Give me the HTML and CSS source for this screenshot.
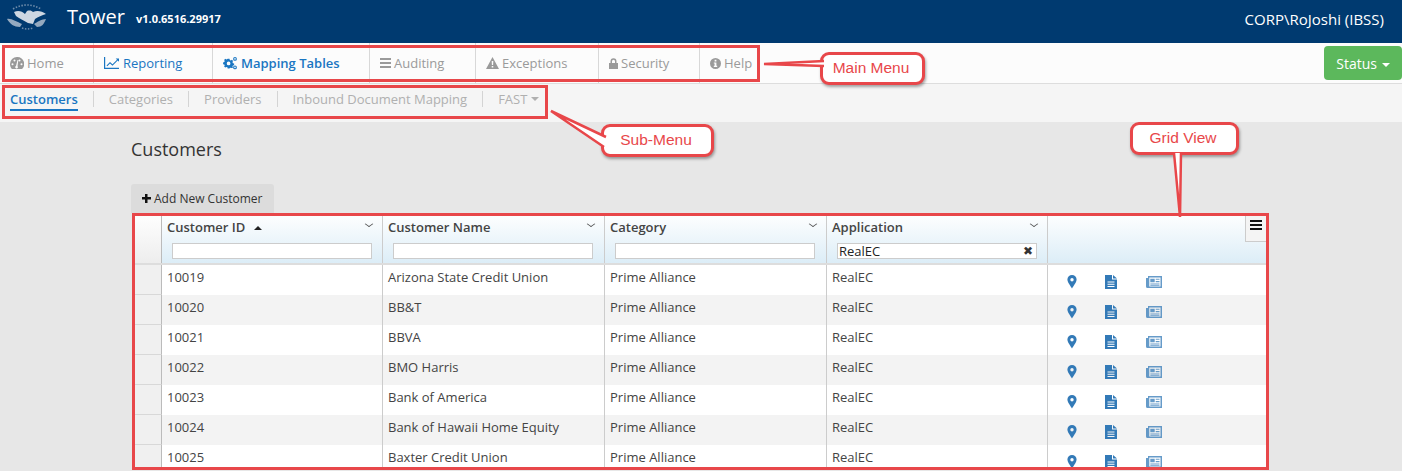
FILE: index.html
```html
<!DOCTYPE html>
<html lang="en">
  <head>
    <meta charset="UTF-8" />
    <title>Tower</title>
    <link rel="stylesheet" href="styles.css">
  </head>
  <body>
    <svg class="defs" width="0" height="0">
      <symbol id="i-pin" viewBox="0 0 10 14"><path fill-rule="evenodd" d="M5 0a4.6 4.6 0 0 0-4.6 4.6C.4 7.4 3.6 11 5 13.6 6.400 11 9.600 7.400 9.600 4.600A4.600 4.600 0 0 0 5 0zm0 3a1.700 1.700 0 1 1 0 3.400A1.700 1.700 0 0 1 5 3z"/></symbol>
      <symbol id="i-doc" viewBox="0 0 12 14"><path fill-rule="evenodd" d="M0 0h7v4.500h5V14H0zM8 0l4 3.500H8zM2.500 6.500v1h7v-1zm0 2.200v1h7v-1zm0 2.200v1h7v-1z"/></symbol>
      <symbol id="i-news" viewBox="0 0 16 12"><path fill-rule="evenodd" opacity=".75" d="M2 0h14v12H1.500A1.500 1.500 0 0 1 0 10.500V2h2zM3.300 1.500V10.500h11.200V1.500zM4.300 2.700h4.400v3.600H4.300zM9.700 2.700h3.800v1H9.700zm0 2.400h3.800v1.200H9.700zM4.300 7.400h9.200v1H4.300zm0 1.700h9.200v.7H4.300z"/></symbol>
    </svg>

    <header class="topbar">
      <div class="brand">
        <svg class="logo" width="42" height="30" viewBox="0 0 42 30">
          <path d="M6 7Q20-1 34 7" fill="none" stroke="#6f8dab" stroke-width="1.600" stroke-dasharray="1.500 1.500"/>
          <path d="M7 10C11 8 15 9 18 12L20 9C23 8 25 9 26 10C30 8 35 9 39 12C35 13 31 15 28 17L26 22 21 21C17 19 12 16 9 14Z" fill="#cdd7e2"/>
          <path d="M0 17C4 16 10 20 15 22L13 25C7 25 3 22 0 17ZM39 17C35 17 30 20 27 22L30 25C35 25 37 22 39 17Z" fill="#94a9bf"/>
          <path d="M15 26Q20 28 26 26" fill="none" stroke="#6f8dab" stroke-width="1.500" stroke-dasharray="1.500 1.500"/>
        </svg>
        <span class="brand-name">Tower</span>
        <span class="brand-version">v1.0.6516.29917</span>
      </div>
      <div class="user-name">CORP\RoJoshi (IBSS)</div>
    </header>

    <nav class="mainnav">
      <ul class="mainnav-list">
        <li class="mainnav-item item-home">
          <svg class="ico" width="14" height="12" viewBox="0 0 14 12"><path fill-rule="evenodd" d="M7 0a7 7 0 0 0-7 7c0 1.900.7 3.600 1.900 5h10.200A7 7 0 0 0 7 0zM2.500 6.200a1 1 0 1 1 0 2 1 1 0 0 1 0-2zM4.500 2.500a1 1 0 1 1 0 2 1 1 0 0 1 0-2zM9.500 2.500a1 1 0 1 1 0 2 1 1 0 0 1 0-2zM11.500 6.200a1 1 0 1 1 0 2 1 1 0 0 1 0-2zM6 9l1.500-6 .8.200L7.500 9.300A1.300 1.300 0 1 1 6 9z"/></svg>
          Home
        </li>
        <li class="mainnav-item item-reporting is-blue">
          <svg class="ico" width="15" height="12" viewBox="0 0 15 12"><path d="M0 0h1.200v10.800H15V12H0z"/><path d="M2.500 8.500 6 5l2.500 2.300L13 2.800l-1.300-1.300H15v3.300l-1.300-1.300-5.200 5.200L6 6.400 3.300 9.300z"/></svg>
          Reporting
        </li>
        <li class="mainnav-item item-mapping is-blue is-active">
          <svg class="ico" width="15" height="13" viewBox="0 0 15 13"><path fill-rule="evenodd" d="M4 2.500h2l.3 1.300 1.100.5 1.200-.7 1.300 1.400-.7 1.100.5 1.200 1.300.3v2l-1.300.3-.5 1.100.7 1.200L8 12.600l-.7-.5-1 .4-.3 .5H4l-.3-1.200-1.100-.5-1.200.7L.1 11l.7-1.200-.5-1.100L-1 8.400v-2l1.300-.3.500-1.200L.100 3.800 1.400 2.500l1.200.7 1.100-.5zM5 5.500a2 2 0 1 0 0 4 2 2 0 0 0 0-4z" transform="translate(1 -.5) scale(.92)"/><path fill-rule="evenodd" d="M12 0a1.900 1.900 0 1 1 0 3.800A1.900 1.900 0 0 1 12 0zm0 1.100a.8.800 0 1 0 0 1.600.8.800 0 0 0 0-1.600zM12 8.500a1.900 1.900 0 1 1 0 3.800 1.900 1.900 0 0 1 0-3.800zm0 1.100a.8.800 0 1 0 0 1.600.8.800 0 0 0 0-1.600z"/></svg>
          Mapping Tables
        </li>
        <li class="mainnav-item item-auditing">
          <svg class="ico" width="11" height="10" viewBox="0 0 11 10"><path d="M0 0h11v2H0zM0 4h11v2H0zM0 8h11v2H0z"/></svg>
          Auditing
        </li>
        <li class="mainnav-item item-exceptions">
          <svg class="ico" width="13" height="12" viewBox="0 0 13 12"><path fill-rule="evenodd" d="M6.500 0 13 12H0zM5.700 4l.2 4h1.200l.2-4zM5.700 9v1.500h1.600V9z"/></svg>
          Exceptions
        </li>
        <li class="mainnav-item item-security">
          <svg class="ico" width="9" height="11" viewBox="0 0 9 11"><path fill-rule="evenodd" d="M1.500 5V3.200a3 3 0 0 1 6 0V5H9v6H0V5zM3 5h3V3.200a1.500 1.500 0 0 0-3 0z"/></svg>
          Security
        </li>
        <li class="mainnav-item item-help">
          <svg class="ico" width="11" height="11" viewBox="0 0 11 11"><path fill-rule="evenodd" d="M5.500 0a5.500 5.500 0 1 1 0 11 5.500 5.500 0 0 1 0-11zM4.600 1.800v1.700h1.800V1.800zM3.800 4.500v1h.8v2.200h-.8v1.200h3.400V7.700h-.8V4.500z"/></svg>
          Help
        </li>
      </ul>
      <button class="status-btn">Status <span class="caret"></span></button>
    </nav>

    <nav class="subnav">
      <a class="subnav-item is-current item-customers">Customers</a>
      <a class="subnav-item item-categories">Categories</a>
      <a class="subnav-item item-providers">Providers</a>
      <a class="subnav-item item-inbound">Inbound Document Mapping</a>
      <a class="subnav-item item-fast">FAST <span class="caret"></span></a>
    </nav>

    <main class="content">
      <h1 class="page-title">Customers</h1>
      <button class="add-btn"><span class="plus"></span>Add New Customer</button>

      <div class="grid">
        <div class="grid-head">
          <div class="head-gutter"></div>
          <div class="head-cell">
            <div class="head-label">Customer ID <span class="sort-up"></span><span class="chev"></span></div>
            <div class="filter"></div>
          </div>
          <div class="head-cell">
            <div class="head-label">Customer Name<span class="chev"></span></div>
            <div class="filter"></div>
          </div>
          <div class="head-cell">
            <div class="head-label">Category<span class="chev"></span></div>
            <div class="filter"></div>
          </div>
          <div class="head-cell">
            <div class="head-label">Application<span class="chev"></span></div>
            <div class="filter">RealEC<span class="filter-clear">✖</span></div>
          </div>
          <div class="head-cell head-last">
            <div class="grid-menu"><span></span><span></span><span></span></div>
          </div>
        </div>

        <div class="grid-row">
          <div class="row-gutter"></div><div class="cell">10019</div><div class="cell">Arizona State Credit Union</div><div class="cell">Prime Alliance</div><div class="cell">RealEC</div>
          <div class="cell cell-actions"><svg class="act-pin"><use href="#i-pin"/></svg><svg class="act-doc"><use href="#i-doc"/></svg><svg class="act-news"><use href="#i-news"/></svg></div>
        </div>
        <div class="grid-row">
          <div class="row-gutter"></div><div class="cell">10020</div><div class="cell">BB&amp;T</div><div class="cell">Prime Alliance</div><div class="cell">RealEC</div>
          <div class="cell cell-actions"><svg class="act-pin"><use href="#i-pin"/></svg><svg class="act-doc"><use href="#i-doc"/></svg><svg class="act-news"><use href="#i-news"/></svg></div>
        </div>
        <div class="grid-row">
          <div class="row-gutter"></div><div class="cell">10021</div><div class="cell">BBVA</div><div class="cell">Prime Alliance</div><div class="cell">RealEC</div>
          <div class="cell cell-actions"><svg class="act-pin"><use href="#i-pin"/></svg><svg class="act-doc"><use href="#i-doc"/></svg><svg class="act-news"><use href="#i-news"/></svg></div>
        </div>
        <div class="grid-row">
          <div class="row-gutter"></div><div class="cell">10022</div><div class="cell">BMO Harris</div><div class="cell">Prime Alliance</div><div class="cell">RealEC</div>
          <div class="cell cell-actions"><svg class="act-pin"><use href="#i-pin"/></svg><svg class="act-doc"><use href="#i-doc"/></svg><svg class="act-news"><use href="#i-news"/></svg></div>
        </div>
        <div class="grid-row">
          <div class="row-gutter"></div><div class="cell">10023</div><div class="cell">Bank of America</div><div class="cell">Prime Alliance</div><div class="cell">RealEC</div>
          <div class="cell cell-actions"><svg class="act-pin"><use href="#i-pin"/></svg><svg class="act-doc"><use href="#i-doc"/></svg><svg class="act-news"><use href="#i-news"/></svg></div>
        </div>
        <div class="grid-row">
          <div class="row-gutter"></div><div class="cell">10024</div><div class="cell">Bank of Hawaii Home Equity</div><div class="cell">Prime Alliance</div><div class="cell">RealEC</div>
          <div class="cell cell-actions"><svg class="act-pin"><use href="#i-pin"/></svg><svg class="act-doc"><use href="#i-doc"/></svg><svg class="act-news"><use href="#i-news"/></svg></div>
        </div>
        <div class="grid-row">
          <div class="row-gutter"></div><div class="cell">10025</div><div class="cell">Baxter Credit Union</div><div class="cell">Prime Alliance</div><div class="cell">RealEC</div>
          <div class="cell cell-actions"><svg class="act-pin"><use href="#i-pin"/></svg><svg class="act-doc"><use href="#i-doc"/></svg><svg class="act-news"><use href="#i-news"/></svg></div>
        </div>
      </div>
    </main>

    <!-- red annotations drawn over the screenshot -->
    <div class="mark mark-main"></div>
    <div class="mark mark-sub"></div>
    <div class="mark mark-grid"></div>
    <div class="callout callout-main">Main Menu</div>
    <div class="callout callout-sub">Sub-Menu</div>
    <div class="callout callout-grid">Grid View</div>
    <svg class="pointers" width="1402" height="471">
      <polyline points="824,61 764,64 824,66"/>
      <polyline points="606,137 551,111 604,147"/>
      <polyline points="1174,153 1180,217 1181,153"/>
    </svg>
  </body>
</html>
```

FILE: styles.css
```css
* {
  box-sizing: border-box;
}

html,
body {
  height: 471px;
  overflow: hidden;
}

body {
  margin: 0;
  font-family: "Open Sans", sans-serif;
  font-size: 13px;
  color: #444;
  background-color: #e7e7e7;
}

.defs {
  position: absolute;
}

.caret {
  display: inline-block;
  width: 0;
  height: 0;
  margin-left: 1px;
  vertical-align: middle;
  border-top: 4px solid;
  border-left: 4px solid transparent;
  border-right: 4px solid transparent;
}

/* top bar */
.topbar {
  height: 43px;
  background-color: #003a70;
  color: #fff;
  display: flex;
  justify-content: space-between;
  align-items: center;
  padding: 0 18px 6px 7px;
}

.brand {
  display: flex;
  align-items: center;
}

.logo {
  margin-right: 18px;
  margin-top: -3px;
}

.brand-name {
  font-size: 20px;
  margin-right: 11px;
  margin-top: -4px;
}

.brand-version {
  font-size: 11px;
  font-weight: 700;
}

.user-name {
  font-size: 15px;
}

/* main menu */
.mainnav {
  height: 41px;
  background-color: #fcfcfc;
  border-bottom: 1px solid #ddd;
  display: flex;
  justify-content: space-between;
}

.mainnav-list {
  display: flex;
  list-style: none;
  margin: 0;
  padding: 0;
}

.mainnav-item {
  display: flex;
  align-items: center;
  gap: 3px;
  height: 40px;
  padding-left: 10px;
  border-right: 1px solid #d8d8d8;
  color: #9a9a9a;
  fill: #9a9a9a;
}

.mainnav-item.is-blue {
  color: #1a76c2;
  fill: #1a76c2;
}

.mainnav-item.is-active {
  font-weight: 600;
}

.item-home { width: 94px; }
.item-reporting { width: 119px; gap: 4px; }
.item-mapping { width: 157px; }
.item-auditing { width: 106px; }
.item-exceptions { width: 123px; }
.item-security { width: 101px; }
.item-help { border-right: 0; }

.status-btn {
  width: 78px;
  height: 34px;
  margin-top: 3px;
  border: 0;
  border-radius: 4px;
  background-color: #5cb85c;
  color: #fff;
  font-family: inherit;
  font-size: 14px;
  padding: 0;
}

/* sub menu */
.subnav {
  height: 38px;
  background-color: #f5f5f5;
  display: flex;
  align-items: center;
  padding: 0 0 8px 10px;
  font-size: 13px;
  color: #b0b0b0;
}

.subnav-item {
  display: flex;
  align-items: center;
  gap: 3px;
  height: 16px;
}

.subnav-item + .subnav-item {
  padding-left: 15px;
  margin-left: 15px;
  border-left: 1px solid #d4d4d4;
}

.subnav-item.is-current {
  position: relative;
  color: #1a76c2;
  font-weight: 600;
}

.subnav-item.is-current::after {
  content: "";
  position: absolute;
  left: 0;
  right: 0;
  bottom: -4px;
  height: 2px;
  background-color: #1a76c2;
}

/* page body */
.content {
  padding: 15px 0 0 131px;
}

.page-title {
  margin: 0 0 23px;
  font-size: 18px;
  font-weight: 400;
  line-height: 24px;
  color: #333;
}

.add-btn {
  display: flex;
  align-items: center;
  gap: 3px;
  height: 29px;
  width: 143px;
  padding: 0 0 0 11px;
  border: 0;
  border-radius: 3px 3px 0 0;
  background-color: #dcdcdc;
  color: #333;
  font-family: inherit;
  font-size: 12px;
}

.plus {
  position: relative;
  width: 9px;
  height: 9px;
  background:
    linear-gradient(#111, #111) center / 9px 2.500px no-repeat,
    linear-gradient(#111, #111) center / 2.500px 9px no-repeat;
}

/* grid */
.grid {
  width: 1132px;
  height: 254px;
  margin-left: 3px;
  background-color: #fff;
  overflow: hidden;
  font-size: 13px;
}

.grid-head,
.grid-row {
  display: grid;
  grid-template-columns: 28px 221px 222px 222px 221px 1fr;
}

.grid-head {
  height: 52px;
  border-bottom: 2px solid #ddd;
  background: linear-gradient(#fff, #dcedf7);
}

.head-gutter {
  background: linear-gradient(#fff, #ededed);
  border-right: 1px solid #bbb;
}

.head-cell {
  position: relative;
  border-right: 1px solid #ccc;
  padding: 5px 0 0 5px;
}

.head-last {
  border-right: 0;
}

.head-label {
  position: relative;
  height: 25px;
  font-weight: 600;
  color: #444;
}

.sort-up {
  display: inline-block;
  margin-left: 5px;
  vertical-align: 2px;
  border-bottom: 4px solid #222;
  border-left: 4px solid transparent;
  border-right: 4px solid transparent;
}

.chev {
  position: absolute;
  top: 3px;
  right: 10px;
  width: 6px;
  height: 6px;
  border-right: 1px solid #555;
  border-bottom: 1px solid #555;
  transform: scaleY(.7) rotate(45deg);
}

.filter {
  position: relative;
  width: 200px;
  height: 16px;
  margin-left: 5px;
  padding-left: 1px;
  border: 1px solid #ccc;
  background-color: #fff;
  line-height: 14px;
  color: #222;
}

.filter-clear {
  position: absolute;
  right: 3px;
  top: 0;
  font-size: 12px;
  color: #333;
}

.grid-menu {
  position: absolute;
  top: 0;
  right: 0;
  width: 21px;
  height: 29px;
  padding: 7px 4px 0;
  background-color: #f4f4f4;
  border-left: 1px solid #ccc;
  border-bottom: 1px solid #ccc;
}

.grid-menu span {
  display: block;
  height: 2px;
  margin-bottom: 2px;
  background-color: #111;
}

.grid-row {
  height: 30px;
}

.grid-row:nth-child(odd) {
  background-color: #f3f3f3;
}

.row-gutter {
  background-color: #f0f0f0;
  border-right: 1px solid #bbb;
  border-bottom: 1px solid #d8d8d8;
}

.cell {
  padding: 3px 0 0 5px;
  border-right: 1px solid #ccc;
  color: #444;
}

.cell-actions {
  display: flex;
  border-right: 0;
  padding: 10px 0 0 19px;
  fill: #337ab7;
}

.act-pin {
  width: 10px;
  height: 14px;
  margin-right: 28px;
}

.act-doc {
  width: 12px;
  height: 14px;
  margin-right: 29px;
}

.act-news {
  width: 16px;
  height: 12px;
  margin-top: 1px;
}

/* annotations */
.mark {
  position: absolute;
  border: 3px solid #e8474a;
}

.mark-main {
  left: 2px;
  top: 45px;
  width: 758px;
  height: 37px;
}

.mark-sub {
  left: 2px;
  top: 85px;
  width: 546px;
  height: 34px;
}

.mark-grid {
  left: 132px;
  top: 213px;
  width: 1137px;
  height: 257px;
}

.pointers {
  position: absolute;
  left: 0;
  top: 0;
  fill: #fff;
  stroke: #e8474a;
  stroke-width: 2.500px;
}

.callout {
  position: absolute;
  display: flex;
  justify-content: center;
  align-items: center;
  padding: 0 3px 2px 0;
  border: 3px solid #e8474a;
  border-radius: 9px;
  background-color: #fff;
  box-shadow: 1px 2px 3px rgba(0, 0, 0, .35);
  color: #e8474a;
  font-family: "Liberation Sans", sans-serif;
  font-size: 15.500px;
}

.callout-main {
  left: 820px;
  top: 52px;
  width: 105px;
  height: 33px;
}

.callout-sub {
  left: 601px;
  top: 124px;
  width: 113px;
  height: 33px;
}

.callout-grid {
  left: 1130px;
  top: 122px;
  width: 109px;
  height: 33px;
}
```
